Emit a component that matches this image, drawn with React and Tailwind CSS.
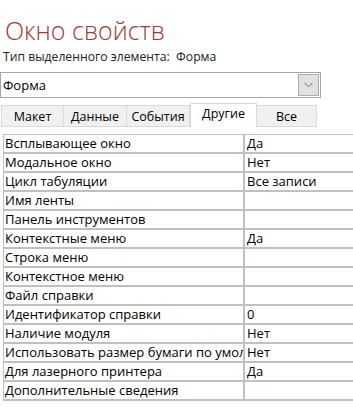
import React from 'react';

const rows = [
  ['Всплывающее окно', 'Да'],
  ['Модальное окно', 'Нет'],
  ['Цикл табуляции', 'Все записи'],
  ['Имя ленты', ''],
  ['Панель инструментов', ''],
  ['Контекстные меню', 'Да'],
  ['Строка меню', ''],
  ['Контекстное меню', ''],
  ['Файл справки', ''],
  ['Идентификатор справки', '0'],
  ['Наличие модуля', 'Нет'],
  ['Использовать размер бумаги по умолчанию', 'Нет'],
  ['Для лазерного принтера', 'Да'],
  ['Дополнительные сведения', ''],
];

const tabs = ['Макет', 'Данные', 'События', 'Другие', 'Все'];
const tabWidths = ['w-[63px]', 'w-[64px]', 'w-[64px]', 'w-[67px]', 'w-[61px]'];

const App = () => {
  return (
    <div
      className="w-[353px] h-[411px] bg-white overflow-hidden text-black"
      style={{ fontFamily: '"Open Sans", "Noto Sans", sans-serif' }}
    >
      {/* Title */}
      <div className="pl-[5px] pt-[15px] h-[48px] text-[25px] leading-[30px] font-light text-[#a4373a]">
        Окно свойств
      </div>

      {/* Selection type */}
      <div className="pl-[3px] h-[24px] text-[12.2px] leading-[18px] text-[#222]">
        Тип выделенного элемента:&nbsp; Форма
      </div>

      {/* Combo box */}
      <div className="w-[321px] h-[26px] border border-[#a6a6a6] flex items-center">
        <div className="flex-1 pl-[2px] text-[13px] leading-[24px]">Форма</div>
        <div className="w-[21px] h-[22px] mr-[1px] bg-[#e1e1e1] border border-[#adadad] flex items-center justify-center">
          <svg width="9" height="6" viewBox="0 0 9 6" fill="none">
            <path d="M0.5 0.8 L4.5 4.8 L8.5 0.8" stroke="#606060" strokeWidth="1" />
          </svg>
        </div>
      </div>

      {/* Tabs */}
      <div className="flex items-end h-[29px] pl-[1px]">
        {tabs.map((t, i) => (
          <div
            key={t}
            className={`${tabWidths[i]} flex justify-center text-[12.5px] whitespace-nowrap ${
              t === 'Другие'
                ? 'h-[24px] bg-white border border-b-0 border-[#d9d9d9] leading-[20px]'
                : 'h-[22px] bg-[#f0f0f0] border border-[#d9d9d9] -ml-px first:ml-0 leading-[22px]'
            }`}
          >
            {t}
          </div>
        ))}
      </div>

      {/* Property grid */}
      <div className="ml-[3px] mt-[7px] border-l border-t border-[#c0c0c0] text-[13px]">
        {rows.map(([label, value]) => (
          <div key={label} className="flex h-[19px] border-b-2 border-[#c0c0c0]">
            <div className="w-[239px] pl-px leading-[17px] whitespace-nowrap overflow-hidden">{label}</div>
            <div className="w-[2px] bg-[#c0c0c0]" />
            <div className="flex-1 pl-[2px] leading-[17px] whitespace-nowrap">{value}</div>
          </div>
        ))}
      </div>
    </div>
  );
};

export default App;
